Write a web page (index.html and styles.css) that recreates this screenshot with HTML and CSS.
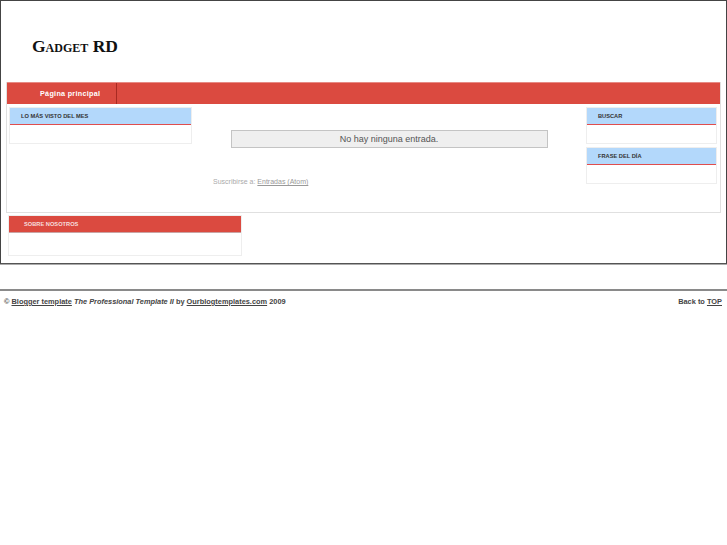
FILE: index.html
```html
<!DOCTYPE html>
<html lang="es">
<head>
<meta charset="utf-8">
<title>Gadget RD</title>
<link rel="stylesheet" href="styles.css">
</head>
<body>
<div class="outer">
  <div class="header">
    <h1 class="title">Gadget RD</h1>
  </div>
  <div class="main">
    <div class="nav">
      <a class="tab" href="#">Página principal</a>
    </div>
    <div class="cols">
      <div class="side side-left">
        <div class="widget">
          <div class="w-head">LO MÁS VISTO DEL MES</div>
          <div class="w-body"></div>
        </div>
      </div>
      <div class="center">
        <div class="status">No hay ninguna entrada.</div>
        <div class="feed">Suscribirse a: <a href="#">Entradas (Atom)</a></div>
      </div>
      <div class="side side-right">
        <div class="widget">
          <div class="w-head">BUSCAR</div>
          <div class="w-body"></div>
        </div>
        <div class="widget">
          <div class="w-head">FRASE DEL DÍA</div>
          <div class="w-body"></div>
        </div>
      </div>
    </div>
  </div>
  <div class="bottom">
    <div class="widget widget-red">
      <div class="w-head">SOBRE NOSOTROS</div>
      <div class="w-body"></div>
    </div>
  </div>
</div>
<div class="footer">
  <div class="f-left">© <a href="#">Blogger template</a> <i>The Professional Template II</i> by <a href="#">Ourblogtemplates.com</a> 2009</div>
  <div class="f-right">Back to <a href="#">TOP</a></div>
</div>
</body>
</html>
```
FILE: styles.css
```css
* { box-sizing: border-box; }
body {
  margin: 0;
  background: #fff;
  font-family: "Liberation Sans", Arial, sans-serif;
  color: #333;
}
.outer {
  width: 727px;
  height: 264px;
  border: 1px solid #444;
  border-bottom: 1px solid #555;
  box-shadow: 0 1px 0 #aaa;
  padding: 0 5px;
}
.header {
  height: 81px;
  padding: 34px 0 0 26px;
}
.title {
  margin: 0;
  font-family: "Liberation Serif", "Times New Roman", serif;
  font-variant: small-caps;
  font-weight: bold;
  font-size: 17.5px;
  line-height: 22px;
  color: #111;
}
.main {
  border: 1px solid #e0e0e0;
  border-top: none;
}
.nav {
  height: 22px;
  background: #db4a40;
  border-top: 1px solid #e78a84;
  display: flex;
}
.tab {
  width: 110px;
  border-right: 1px solid #a82a22;
  color: #fff;
  font-weight: bold;
  font-size: 7.2px;
  text-decoration: none;
  display: flex;
  align-items: center;
  padding: 0 0 1px 33px;
  letter-spacing: 0.3px;
}
.cols {
  display: grid;
  grid-template-columns: 183px 1fr 131px;
  padding: 3px 3px 28px 2px;
  height: 108px;
}
.side { display: flex; flex-direction: column; gap: 3px; }
.widget {
  border: 1px solid #eeeeee;
}
.w-head {
  height: 17px;
  background: #b3d8fb;
  border-bottom: 1px solid #e04d4d;
  font-size: 5.7px;
  font-weight: bold;
  color: #333;
  padding: 0 0 0 11px;
  display: flex;
  align-items: center;
}
.w-body { height: 18px; }
.side-right .w-head { padding-left: 11px; }
.center {
  display: flex;
  flex-direction: column;
  align-items: center;
  padding-top: 23px;
}
.status {
  width: 317px;
  height: 18px;
  background: #efefef;
  border: 1px solid #c4c4c4;
  font-size: 9px;
  color: #555;
  display: flex;
  align-items: center;
  justify-content: center;
}
.feed {
  align-self: flex-start;
  margin: 30px 0 0 21px;
  font-size: 7px;
  color: #aaa;
}
.feed a { color: #999; }
.bottom {
  padding: 2px 0 0 2px;
}
.widget-red { width: 234px; }
.widget-red .w-head {
  background: #db4a40;
  border-bottom: 1px solid #c9a4a4;
  color: #f6dede;
  height: 17px;
  padding-left: 15px;
}
.widget-red .w-body { height: 22px; }
.footer {
  margin-top: 25px;
  border-top: 2px solid #8a8a8a;
  display: flex;
  justify-content: space-between;
  padding: 6px 5px 0 4px;
  font-size: 7.4px;
  font-weight: bold;
  color: #444;
}
.footer a { color: #444; }
```
